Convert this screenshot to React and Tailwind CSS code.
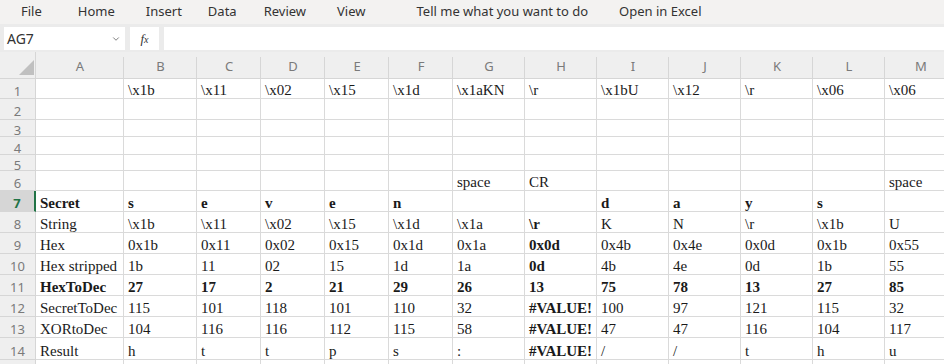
import { ChevronDown } from "lucide-react";

const cols = ["A", "B", "C", "D", "E", "F", "G", "H", "I", "J", "K", "L", "M"];

// rows: [rowNumber, height, cells, boldRow] — a cell is text, or [text, bold]
const rows = [
  [1, 20, ["", "\\x1b", "\\x11", "\\x02", "\\x15", "\\x1d", "\\x1aKN", "\\r", "\\x1bU", "\\x12", "\\r", "\\x06", "\\x06"]],
  [2, 21, []],
  [3, 17, []],
  [4, 18, []],
  [5, 16, []],
  [6, 20, ["", "", "", "", "", "", "space", "CR", "", "", "", "", "space"]],
  [7, 21, ["Secret", "s", "e", "v", "e", "n", "", "", "d", "a", "y", "s", ""], true],
  [8, 21, ["String", "\\x1b", "\\x11", "\\x02", "\\x15", "\\x1d", "\\x1a", ["\\r", true], "K", "N", "\\r", "\\x1b", "U"]],
  [9, 21, ["Hex", "0x1b", "0x11", "0x02", "0x15", "0x1d", "0x1a", ["0x0d", true], "0x4b", "0x4e", "0x0d", "0x1b", "0x55"]],
  [10, 21, ["Hex stripped", "1b", "11", "02", "15", "1d", "1a", ["0d", true], "4b", "4e", "0d", "1b", "55"]],
  [11, 21, ["HexToDec", "27", "17", "2", "21", "29", "26", "13", "75", "78", "13", "27", "85"], true],
  [12, 21, ["SecretToDec", "115", "101", "118", "101", "110", "32", ["#VALUE!", true], "100", "97", "121", "115", "32"]],
  [13, 21, ["XORtoDec", "104", "116", "116", "112", "115", "58", ["#VALUE!", true], "47", "47", "116", "104", "117"]],
  [14, 22, ["Result", "h", "t", "t", "p", "s", ":", ["#VALUE!", true], "/", "/", "t", "h", "u"]],
  [15, 21, []],
];

function Cell({ value, bold }) {
  let text = value;
  let b = bold;
  if (Array.isArray(value)) {
    text = value[0];
    b = value[1];
  }
  return (
    <div
      className={`border-r border-b border-[#dadada] bg-white pl-1 flex items-end overflow-visible whitespace-nowrap text-[15px] leading-[15px] text-[#1a1a1a] ${
        b ? "font-bold" : ""
      }`}
      style={{ fontFamily: '"Liberation Serif", serif' }}
    >
      {text}
    </div>
  );
}

function RowCells({ n, h, cells, bold }) {
  const active = n === 7;
  return (
    <>
      <div
        className={`border-b border-[#d6d6d6] flex items-center justify-center pt-[5px] text-[13px] leading-none ${
          active
            ? "bg-[#d6d6d6] text-[#217346] font-bold border-r-2 border-r-[#217346]"
            : "bg-[#efefef] text-[#7a7a7a] border-r"
        }`}
        style={{ height: h }}
      >
        {n}
      </div>
      {cols.map((c, i) => (
        <Cell key={c} value={cells[i] ?? ""} bold={bold} />
      ))}
    </>
  );
}

export default function App() {
  return (
    <div className="w-[944px] h-[364px] overflow-hidden bg-white" style={{ fontFamily: '"Noto Sans", sans-serif' }}>
      {/* MENU */}
      <div className="h-6 bg-[#f3f2f1] flex items-center text-[13px] text-[#333] whitespace-nowrap">
        <span className="ml-[21px]">File</span>
        <span className="ml-[36px]">Home</span>
        <span className="ml-[31px]">Insert</span>
        <span className="ml-[26px]">Data</span>
        <span className="ml-[27px]">Review</span>
        <span className="ml-[31px]">View</span>
        <span className="ml-[51px]">Tell me what you want to do</span>
        <span className="ml-[31px]">Open in Excel</span>
      </div>

      {/* FORMULA BAR */}
      <div className="h-[28px] bg-[#ebebeb] flex items-center pl-1 gap-[5px] pt-px">
        <div className="w-[121px] h-[23px] bg-white flex items-center justify-between px-[3px] text-[14px] text-[#333]">
          <span>AG7</span>
          <ChevronDown size={10} strokeWidth={2} className="text-[#666] mr-[1px]" />
        </div>
        <div className="w-[29px] h-[23px] bg-white flex items-center justify-center">
          <span className="italic text-[13px] text-[#333]" style={{ fontFamily: '"Liberation Serif", serif' }}>
            f<span className="text-[10px]">x</span>
          </span>
        </div>
        <div className="flex-1 h-[23px] bg-white" />
      </div>

      {/* GRID */}
      <div className="grid grid-cols-[36px_88px_73px_64px_64px_64px_64px_72px_72px_72px_72px_72px_72px_72px]">
        <div className="h-[27px] bg-[#efefef] border-r border-b border-[#d6d6d6] relative">
          <svg width="36" height="27" className="absolute inset-0">
            <polygon points="34,8 34,23 19,23" fill="#c0c0c0" />
          </svg>
        </div>
        {cols.map((c) => (
          <div
            key={c}
            className="h-[27px] bg-[#efefef] border-b border-[#d6d6d6] flex items-center justify-center pt-1 text-[13px] text-[#7a7a7a] relative"
          >
            {c}
            <span className="absolute right-0 top-[5px] bottom-0 w-px bg-[#d6d6d6]" />
          </div>
        ))}

        {rows.map(([n, h, cells, bold]) => (
          <RowCells key={n} n={n} h={h} cells={cells} bold={bold} />
        ))}
      </div>
    </div>
  );
}
